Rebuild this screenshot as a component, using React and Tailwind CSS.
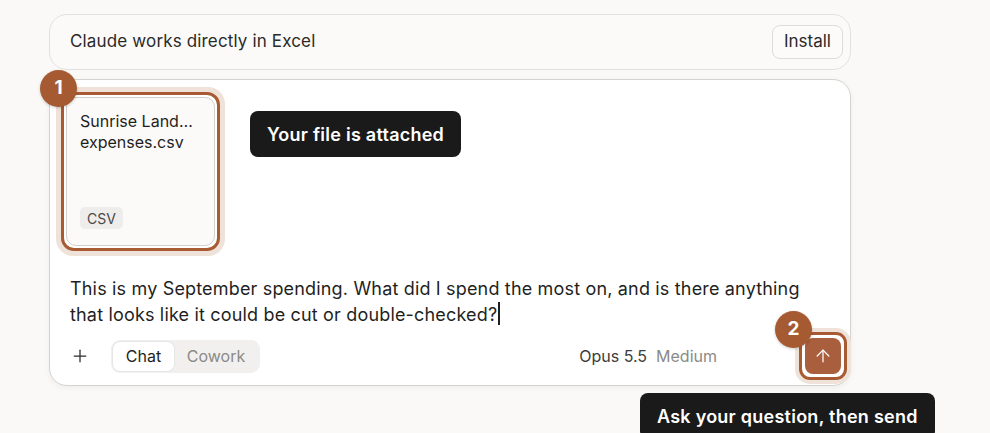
import { Plus, ArrowUp } from "lucide-react";

const Badge = ({ n, className }) => (
  <div
    className={`absolute w-[37px] h-[37px] rounded-full bg-[#a65a32] text-white text-[19px] font-bold flex items-center justify-center shadow-[0_1px_3px_rgba(0,0,0,0.2)] ${className}`}
  >
    {n}
  </div>
);

const Tooltip = ({ children, className }) => (
  <div
    className={`absolute h-[46px] px-[17px] rounded-[8px] bg-[#1a1a1a] text-white text-[18px] tracking-[0.25px] font-semibold flex items-center whitespace-nowrap ${className}`}
  >
    {children}
  </div>
);

const App = () => {
  return (
    <div className="min-h-screen bg-[#faf9f7] font-['Inter',sans-serif] text-[#1f1f1e] pl-[49px] pt-[14px] overflow-hidden">
      <div className="relative w-[802px]">
        {/* excel banner */}
        <div className="h-[56px] rounded-[18px] border border-[#e3e1dd] bg-[#fbfaf8] flex items-center justify-between pl-[20px] pr-[7px]">
          <span className="text-[17px] tracking-[0.15px] text-[#2a2a28]">Claude works directly in Excel</span>
          <button className="h-[34px] px-[11px] rounded-[8px] border border-[#dedcd8] bg-[#fcfbfa] text-[17px] text-[#2a2a28]">
            Install
          </button>
        </div>

        {/* composer */}
        <div className="mt-[9px] h-[307px] rounded-[18px] border border-[#d5d3cf] bg-white shadow-[0_2px_6px_rgba(0,0,0,0.05)] flex flex-col">
          <div className="ml-[6px] mt-[7px] w-[169px] rounded-[17px] bg-[#efe2d8] p-[5px]">
            <div className="rounded-[13px] border-[3px] border-[#a85a32] bg-white p-[2px]">
              <div className="h-[149px] rounded-[10px] border border-[#d3d0cb] bg-[#fbfaf8] px-[13px] pt-[13px] pb-[14px] flex flex-col justify-between">
                <div className="text-[16px] leading-[21px] text-[#1f1f1e]">
                  <div>Sunrise Land…</div>
                  <div>expenses.csv</div>
                </div>
                <span className="self-start h-[22px] px-[7px] mb-[2px] rounded-[5px] bg-[#eeedeb] text-[14px] text-[#4a4946] flex items-center">
                  CSV
                </span>
              </div>
            </div>
          </div>

          <p className="mt-[20px] ml-[20px] text-[18px] tracking-[0.17px] leading-[26px] text-[#1f1f1e]">
            This is my September spending. What did I spend the most on, and is there anything
            <br />
            that looks like it could be cut or double-checked?
            <span className="inline-block align-[-4px] ml-[1px] w-[1.5px] h-[23px] bg-[#1f1f1e]" />
          </p>

          <div className="h-[56px] flex items-center pl-[20px]">
            <Plus size={20} strokeWidth={1.5} className="text-[#2a2a28]" />
            <div className="ml-[21px] h-[33px] rounded-[9px] bg-[#f1f0ee] p-[2px] flex items-center text-[16px]">
              <span className="h-full w-[61px] rounded-[7px] bg-white shadow-[0_0_0_1px_rgba(0,0,0,0.04)] flex items-center justify-center text-[#1f1f1e]">
                Chat
              </span>
              <span className="h-full w-[84px] flex items-center justify-center text-[#8b8a86]">Cowork</span>
            </div>
            <div className="ml-auto flex items-center text-[16px]">
              <span className="text-[#3d3d3a]">Opus 5.5</span>
              <span className="ml-[9px] text-[#8b8a86]">Medium</span>
            </div>
            <div className="ml-[78px] mr-[-1px] rounded-[15px] bg-[#efe2d8] p-[4px]">
              <div className="rounded-[11px] border-[3px] border-[#a85a32] bg-white p-[3px]">
                <div className="w-[36px] h-[36px] rounded-[8px] bg-[#a95f3e] flex items-center justify-center">
                  <ArrowUp size={20} strokeWidth={1.5} className="text-white" />
                </div>
              </div>
            </div>
          </div>
        </div>

        <Badge n="1" className="left-[-9px] top-[56px]" />
        <Badge n="2" className="left-[726px] top-[297px]" />

        <Tooltip className="left-[201px] top-[97px]">Your file is attached</Tooltip>
        <Tooltip className="left-[591px] top-[379px]">Ask your question, then send</Tooltip>
      </div>
    </div>
  );
};

export default App;
